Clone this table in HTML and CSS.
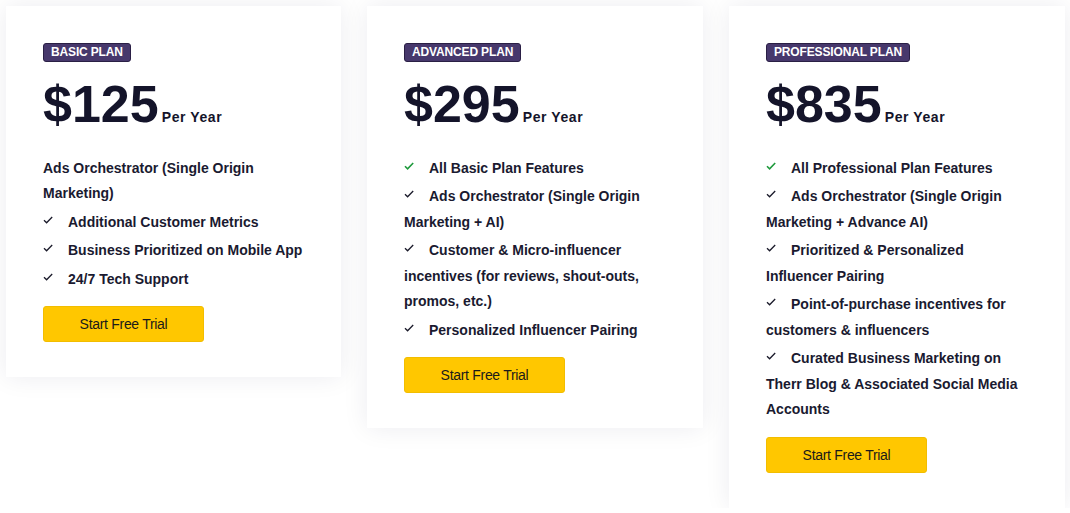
FILE: index.html
```html
<!DOCTYPE html>
<html lang="en">
<head>
<meta charset="utf-8">
<title>Pricing Plans</title>
<link rel="stylesheet" href="styles.css">
</head>
<body>
<main class="plans">
  <section class="card">
    <span class="badge">BASIC PLAN</span>
    <div class="price"><span class="amount">$125</span><span class="period">Per Year</span></div>
    <ul class="features">
      <li>Ads Orchestrator (Single Origin Marketing)</li>
      <li><svg class="check" viewBox="0 0 10 8"><path d="M1 4.2 L3.6 6.8 L9.2 1"/></svg>Additional Customer Metrics</li>
      <li><svg class="check" viewBox="0 0 10 8"><path d="M1 4.2 L3.6 6.8 L9.2 1"/></svg>Business Prioritized on Mobile App</li>
      <li><svg class="check" viewBox="0 0 10 8"><path d="M1 4.2 L3.6 6.8 L9.2 1"/></svg>24/7 Tech Support</li>
    </ul>
    <button class="cta">Start Free Trial</button>
  </section>
  <section class="card">
    <span class="badge">ADVANCED PLAN</span>
    <div class="price"><span class="amount">$295</span><span class="period">Per Year</span></div>
    <ul class="features">
      <li><svg class="check green" viewBox="0 0 10 8"><path d="M1 4.2 L3.6 6.8 L9.2 1"/></svg>All Basic Plan Features</li>
      <li><svg class="check" viewBox="0 0 10 8"><path d="M1 4.2 L3.6 6.8 L9.2 1"/></svg>Ads Orchestrator (Single Origin Marketing + AI)</li>
      <li><svg class="check" viewBox="0 0 10 8"><path d="M1 4.2 L3.6 6.8 L9.2 1"/></svg>Customer &amp; Micro-influencer incentives (for reviews, shout-outs, promos, etc.)</li>
      <li><svg class="check" viewBox="0 0 10 8"><path d="M1 4.2 L3.6 6.8 L9.2 1"/></svg>Personalized Influencer Pairing</li>
    </ul>
    <button class="cta">Start Free Trial</button>
  </section>
  <section class="card">
    <span class="badge">PROFESSIONAL PLAN</span>
    <div class="price"><span class="amount">$835</span><span class="period">Per Year</span></div>
    <ul class="features">
      <li><svg class="check green" viewBox="0 0 10 8"><path d="M1 4.2 L3.6 6.8 L9.2 1"/></svg>All Professional Plan Features</li>
      <li><svg class="check" viewBox="0 0 10 8"><path d="M1 4.2 L3.6 6.8 L9.2 1"/></svg>Ads Orchestrator (Single Origin Marketing + Advance AI)</li>
      <li><svg class="check" viewBox="0 0 10 8"><path d="M1 4.2 L3.6 6.8 L9.2 1"/></svg>Prioritized &amp; Personalized Influencer Pairing</li>
      <li><svg class="check" viewBox="0 0 10 8"><path d="M1 4.2 L3.6 6.8 L9.2 1"/></svg>Point-of-purchase incentives for customers &amp; influencers</li>
      <li><svg class="check" viewBox="0 0 10 8"><path d="M1 4.2 L3.6 6.8 L9.2 1"/></svg>Curated Business Marketing on Therr Blog &amp; Associated Social Media Accounts</li>
    </ul>
    <button class="cta">Start Free Trial</button>
  </section>
</main>
</body>
</html>
```

FILE: styles.css
```css
* { box-sizing: border-box; }

html, body {
  margin: 0;
  padding: 0;
  background: #ffffff;
}

body {
  font-family: "Liberation Sans", Arial, sans-serif;
  color: #17172e;
}

.plans {
  display: grid;
  grid-template-columns: 335px 336px 336px;
  column-gap: 26px;
  align-items: start;
  padding: 6px 0 0 6px;
}

.card {
  background: #ffffff;
  box-shadow: 0 0 24px rgba(30, 30, 70, 0.08);
  padding: 37px 35px 35px 37px;
  display: flex;
  flex-direction: column;
  align-items: flex-start;
}

.badge {
  display: inline-block;
  font-size: 12px;
  font-weight: 700;
  letter-spacing: -0.15px;
  line-height: 15px;
  padding: 1px 7px;
  color: #ffffff;
  background: #47386c;
  border: 1px solid #2a1f45;
  border-radius: 3px;
}

.price {
  display: flex;
  align-items: baseline;
  margin-top: 16px;
}

.amount {
  font-size: 52px;
  line-height: 52px;
  font-weight: 700;
  color: #14142a;
}

.period {
  margin-left: 3px;
  font-size: 14px;
  font-weight: 700;
  letter-spacing: 0.6px;
  color: #14142a;
}

.features {
  list-style: none;
  margin: 25.5px 0 0;
  padding: 0;
  display: flex;
  flex-direction: column;
  gap: 3px;
}

.features li {
  font-size: 14px;
  line-height: 25.5px;
  font-weight: 700;
  color: #1a1a30;
}

.check {
  display: inline-block;
  width: 10px;
  height: 8px;
  margin-right: 15px;
  vertical-align: 3px;
  fill: none;
  stroke: #1a1a2a;
  stroke-width: 1.3;
}

.check.green {
  stroke: #1f9a3c;
  stroke-width: 1.6;
}

.cta {
  margin-top: 14px;
  width: 161px;
  height: 36px;
  background: #ffc700;
  border: 1px solid #f2bd00;
  border-radius: 3px;
  font-family: "Liberation Sans", Arial, sans-serif;
  font-size: 14px;
  letter-spacing: -0.3px;
  color: #1a1a1a;
  cursor: pointer;
}
```
